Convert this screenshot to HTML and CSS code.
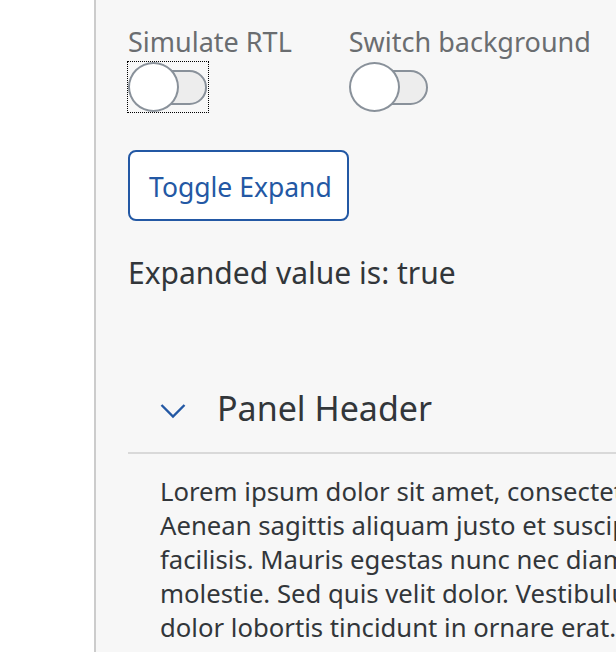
FILE: index.html
```html
<!DOCTYPE html>
<html lang="en">
<head>
<meta charset="utf-8">
<title>Panel</title>
<link rel="stylesheet" href="styles.css">
</head>
<body>
<div class="layout">
  <aside class="sidebar"></aside>
  <main class="main">
    <div class="switch-row">
      <div class="field">
        <div class="field-label">Simulate RTL</div>
        <div class="switch switch-focused"><span class="switch-track"></span><span class="switch-knob"></span></div>
      </div>
      <div class="field">
        <div class="field-label">Switch background</div>
        <div class="switch"><span class="switch-track"></span><span class="switch-knob"></span></div>
      </div>
    </div>
    <button class="btn" type="button">Toggle Expand</button>
    <p class="status">Expanded value is: true</p>
    <section class="panel">
      <div class="panel-header">
        <svg class="chevron" width="26" height="16" viewBox="0 0 26 16"><polyline points="1.5,2 13,13.5 24.5,2" fill="none" stroke="#2358a4" stroke-width="2.4"/></svg>
        <span class="panel-title">Panel Header</span>
      </div>
      <div class="panel-body">
        <span class="line">Lorem ipsum dolor sit amet, consectetur adipiscing elit.</span>
        <span class="line">Aenean sagittis aliquam justo et suscipit. Nam molestie nunc a</span>
        <span class="line">facilisis. Mauris egestas nunc nec diam convallis, in pretium</span>
        <span class="line">molestie. Sed quis velit dolor. Vestibulum et placerat sem, ut</span>
        <span class="line">dolor lobortis tincidunt in ornare erat. Vivamus vitae sapien.</span>
      </div>
    </section>
  </main>
</div>
</body>
</html>
```
FILE: styles.css
```css
html, body {
  margin: 0;
  padding: 0;
  height: 100%;
  overflow: hidden;
}
body {
  font-family: "Noto Sans", "Open Sans", sans-serif;
  font-size: 26px;
  color: #32363a;
  background: #ffffff;
}
.layout {
  display: flex;
  min-height: 100vh;
}
.sidebar {
  flex: 0 0 94px;
  background: #ffffff;
  border-right: 2px solid #cccccc;
}
.main {
  flex: 1;
  min-width: 0;
  background: #f7f7f7;
  padding: 25px 0 0 32px;
  overflow: hidden;
}
.switch-row {
  display: flex;
  gap: 57px;
}
.field {
  display: flex;
  flex-direction: column;
  gap: 3px;
}
.field-label {
  font-size: 27px;
  line-height: 34px;
  color: #6a6d70;
  white-space: nowrap;
}
.switch {
  position: relative;
  width: 80px;
  height: 50px;
  box-sizing: border-box;
}
.switch-focused {
  outline: 1px dotted #000000;
  outline-offset: 0;
}
.switch-track {
  position: absolute;
  left: 2px;
  top: 8px;
  width: 77px;
  height: 35px;
  box-sizing: border-box;
  border: 2px solid #89919a;
  border-radius: 18px;
  background: #ededed;
}
.switch-knob {
  position: absolute;
  left: 0;
  top: 0;
  width: 51px;
  height: 50px;
  box-sizing: border-box;
  border: 2px solid #89919a;
  border-radius: 50%;
  background: #ffffff;
}
.btn {
  display: block;
  margin-top: 38px;
  width: 221px;
  height: 71px;
  box-sizing: border-box;
  padding: 18px 0 15px 19px;
  text-align: left;
  border: 2px solid #2358a4;
  border-radius: 8px;
  background: #ffffff;
  color: #2358a4;
  font-family: inherit;
  font-size: 26.5px;
  line-height: 34px;
  white-space: nowrap;
}
.status {
  margin: 35px 0 0;
  font-size: 30px;
  line-height: 34px;
}
.panel {
  margin-top: 96px;
}
.panel-header {
  display: flex;
  align-items: center;
  gap: 31px;
  padding: 0 0 22px 32px;
  border-bottom: 2px solid #d9d9d9;
  width: 1000px;
}
.chevron {
  display: block;
  margin-top: 6px;
}
.panel-title {
  font-size: 34px;
  line-height: 44px;
  white-space: nowrap;
}
.panel-body {
  padding: 21px 0 0 32px;
  font-size: 25.7px;
  line-height: 34px;
}
.line {
  display: block;
  white-space: nowrap;
}
```
